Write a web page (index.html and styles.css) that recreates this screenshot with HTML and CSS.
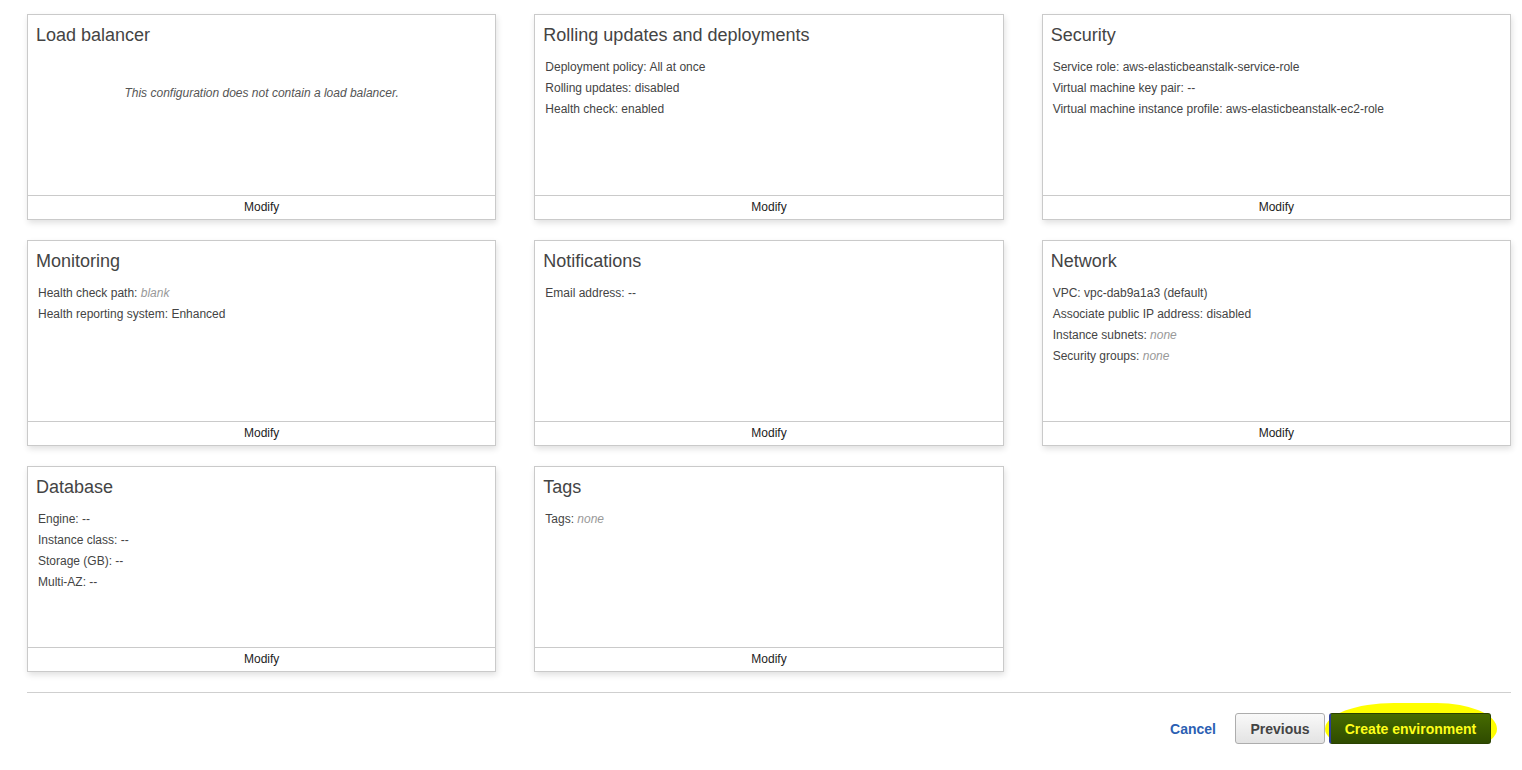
FILE: index.html
```html
<!DOCTYPE html>
<html>
<head>
<meta charset="utf-8">
<link rel="stylesheet" href="styles.css">
</head>
<body>
<div class="page">
  <div class="grid">
    <div class="card">
      <div class="card-body">
        <h2 class="card-title">Load balancer</h2>
        <p class="empty-msg">This configuration does not contain a load balancer.</p>
      </div>
      <div class="card-foot">Modify</div>
    </div>
    <div class="card">
      <div class="card-body">
        <h2 class="card-title">Rolling updates and deployments</h2>
        <ul class="details">
          <li>Deployment policy: All at once</li>
          <li>Rolling updates: disabled</li>
          <li>Health check: enabled</li>
        </ul>
      </div>
      <div class="card-foot">Modify</div>
    </div>
    <div class="card">
      <div class="card-body">
        <h2 class="card-title">Security</h2>
        <ul class="details">
          <li>Service role: aws-elasticbeanstalk-service-role</li>
          <li>Virtual machine key pair: --</li>
          <li>Virtual machine instance profile: aws-elasticbeanstalk-ec2-role</li>
        </ul>
      </div>
      <div class="card-foot">Modify</div>
    </div>
    <div class="card">
      <div class="card-body">
        <h2 class="card-title">Monitoring</h2>
        <ul class="details">
          <li>Health check path: <em class="muted">blank</em></li>
          <li>Health reporting system: Enhanced</li>
        </ul>
      </div>
      <div class="card-foot">Modify</div>
    </div>
    <div class="card">
      <div class="card-body">
        <h2 class="card-title">Notifications</h2>
        <ul class="details">
          <li>Email address: --</li>
        </ul>
      </div>
      <div class="card-foot">Modify</div>
    </div>
    <div class="card">
      <div class="card-body">
        <h2 class="card-title">Network</h2>
        <ul class="details">
          <li>VPC: vpc-dab9a1a3 (default)</li>
          <li>Associate public IP address: disabled</li>
          <li>Instance subnets: <em class="muted">none</em></li>
          <li>Security groups: <em class="muted">none</em></li>
        </ul>
      </div>
      <div class="card-foot">Modify</div>
    </div>
    <div class="card">
      <div class="card-body">
        <h2 class="card-title">Database</h2>
        <ul class="details">
          <li>Engine: --</li>
          <li>Instance class: --</li>
          <li>Storage (GB): --</li>
          <li>Multi-AZ: --</li>
        </ul>
      </div>
      <div class="card-foot">Modify</div>
    </div>
    <div class="card">
      <div class="card-body">
        <h2 class="card-title">Tags</h2>
        <ul class="details">
          <li>Tags: <em class="muted">none</em></li>
        </ul>
      </div>
      <div class="card-foot">Modify</div>
    </div>
  </div>
  <div class="divider"></div>
  <div class="actions">
    <a class="cancel" href="#">Cancel</a>
    <button class="btn btn-prev">Previous</button>
    <span class="highlight-wrap">
      <span class="highlight"></span>
      <button class="btn btn-create">Create environment</button>
    </span>
  </div>
</div>
</body>
</html>
```
FILE: styles.css
```css
* { box-sizing: border-box; }
html, body { margin: 0; padding: 0; background: #fff; }
body {
  font-family: "Liberation Sans", Arial, sans-serif;
  color: #444;
}
.page {
  padding: 14px 11px 0 27px;
}
.grid {
  display: grid;
  grid-template-columns: repeat(3, 1fr);
  column-gap: 38px;
  row-gap: 20px;
}
.card {
  height: 206px;
  border: 1px solid #cacaca;
  background: #fff;
  display: flex;
  flex-direction: column;
  box-shadow: 1px 3px 6px rgba(0, 0, 0, 0.12);
}
.card-body {
  flex: 1;
  padding: 8px 8px 0 8px;
}
.card-title {
  margin: 0;
  font-size: 18px;
  line-height: 24px;
  font-weight: normal;
  color: #444;
}
.details {
  list-style: none;
  margin: 10px 0 0 0;
  padding: 0 0 0 2px;
  font-size: 12px;
  line-height: 21px;
  color: #444;
}
.muted { color: #999; }
.empty-msg {
  margin: 38px 0 0 0;
  text-align: center;
  font-style: italic;
  font-size: 12px;
  line-height: 16px;
  color: #555;
}
.card-foot {
  height: 24px;
  border-top: 1px solid #cacaca;
  text-align: center;
  font-size: 12px;
  line-height: 22px;
  color: #222;
}
.divider {
  margin-top: 20px;
  border-top: 1px solid #cfcfcf;
}
.actions {
  display: flex;
  justify-content: flex-end;
  align-items: center;
  margin-top: 20px;
  padding-right: 20px;
}
.cancel {
  font-size: 14px;
  font-weight: bold;
  color: #2b5fb3;
  text-decoration: none;
  margin-right: 19px;
}
.btn {
  font-family: "Liberation Sans", Arial, sans-serif;
  font-size: 14px;
  font-weight: bold;
  height: 31px;
  border-radius: 3px;
  padding: 0;
}
.btn-prev {
  width: 90px;
  background: linear-gradient(#f9f9f9, #e3e3e3);
  border: 1px solid #adadad;
  color: #444;
  margin-right: 4px;
}
.highlight-wrap {
  position: relative;
  display: inline-block;
}
.highlight {
  position: absolute;
  left: -4px;
  right: -6px;
  top: -10px;
  bottom: -11px;
  background: #ffff00;
  border-radius: 40% 35% 40% 45% / 50% 50% 50% 50%;
}
.btn-create {
  position: relative;
  width: 162px;
  background: linear-gradient(#466b00, #2f4b00);
  border: 1px solid #2a4200;
  border-left: 2px solid #2d3f9a;
  color: #ffff1a;
}
```
